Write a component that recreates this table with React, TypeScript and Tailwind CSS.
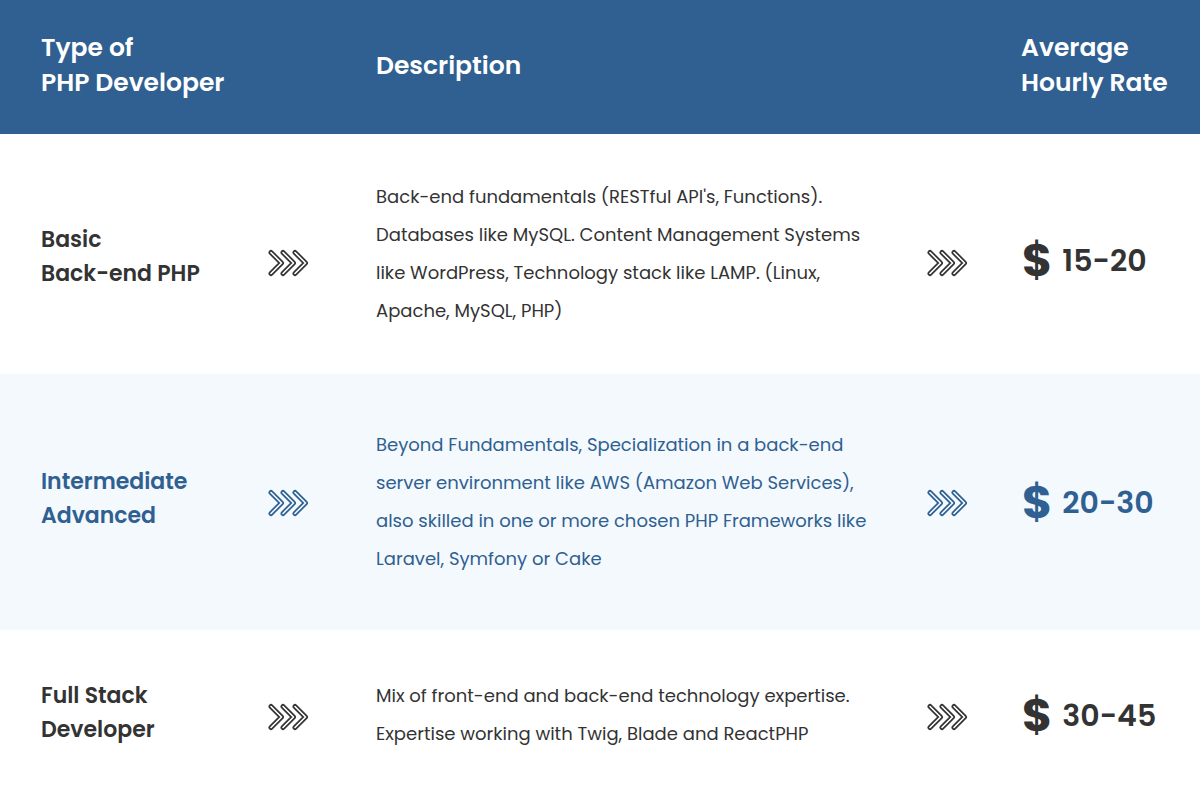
const rows = [
    {
        title: ['Basic', 'Back-end PHP'],
        desc: [
            "Back-end fundamentals (RESTful API's, Functions).",
            'Databases like MySQL. Content Management Systems',
            'like WordPress, Technology stack like LAMP. (Linux,',
            'Apache, MySQL, PHP)',
        ],
        price: '15-20',
        accent: false,
        height: 'h-[240px]',
        titlePad: 'pt-[6px]',
        arrowPad: 'pt-[18px]',
        pricePad: 'pt-[12px]',
    },
    {
        title: ['Intermediate', 'Advanced'],
        desc: [
            'Beyond Fundamentals, Specialization in a back-end',
            'server environment like AWS (Amazon Web Services),',
            'also skilled in one or more chosen PHP Frameworks like',
            'Laravel, Symfony or Cake',
        ],
        price: '20-30',
        accent: true,
        height: 'h-[256px]',
        titlePad: 'pb-[7px]',
        arrowPad: 'pt-[2px]',
        pricePad: 'pt-0',
    },
    {
        title: ['Full Stack', 'Developer'],
        desc: ['Mix of front-end and back-end technology expertise.', 'Expertise working with Twig, Blade and ReactPHP'],
        price: '30-45',
        accent: false,
        height: 'h-[170px]',
        titlePad: 'pb-[5px]',
        arrowPad: 'pt-[4px]',
        pricePad: 'pt-0',
    },
];

function Chevrons({ color, bg }: { color: string; bg: string }) {
    const offsets = [0, 12, 24];
    return (
        <svg width="42" height="28" viewBox="0 0 42 28" fill="none">
            {offsets.map((o) => (
                <path
                    key={'o' + o}
                    d={`M${3 + o} 3.5 L${13.5 + o} 14 L${3 + o} 24.5`}
                    stroke={color}
                    strokeWidth="5"
                    strokeLinecap="round"
                    strokeLinejoin="round"
                />
            ))}
            {offsets.map((o) => (
                <path
                    key={'i' + o}
                    d={`M${3 + o} 3.5 L${13.5 + o} 14 L${3 + o} 24.5`}
                    stroke={bg}
                    strokeWidth="1.6"
                    strokeLinecap="round"
                    strokeLinejoin="round"
                />
            ))}
        </svg>
    );
}

export default function App() {
    return (
        <div className="h-[800px] w-[1200px] overflow-hidden bg-white font-['Poppins','Open_Sans',sans-serif]">
            <div className="grid h-[134px] grid-cols-[376px_645px_1fr] items-center bg-[#2f6091] pb-[4px] text-[25px] font-semibold leading-[35px] text-white">
                <div className="pl-[41px]">
                    Type of
                    <br />
                    PHP Developer
                </div>
                <div>Description</div>
                <div>
                    Average
                    <br />
                    Hourly Rate
                </div>
            </div>
            {rows.map((row) => {
                const color = row.accent ? '#2f6091' : '#333333';
                const bg = row.accent ? '#f3f9fd' : '#ffffff';
                return (
                    <div
                        key={row.price}
                        className={`grid ${row.height} grid-cols-[268px_108px_551px_94px_1fr] items-center ${
                            row.accent ? 'bg-[#f3f9fd] text-[#2f6091]' : 'bg-white text-[#333333]'
                        }`}
                    >
                        <div className={`pl-[41px] text-[22px] font-semibold leading-[34px] ${row.titlePad}`}>
                            {row.title.map((t) => (
                                <div key={t}>{t}</div>
                            ))}
                        </div>
                        <div className={`flex items-center ${row.arrowPad}`}>
                            <Chevrons color={color} bg={bg} />
                        </div>
                        <div className="text-[18px] leading-[38px] whitespace-nowrap">
                            {row.desc.map((d) => (
                                <div key={d}>{d}</div>
                            ))}
                        </div>
                        <div className={`flex items-center ${row.arrowPad}`}>
                            <Chevrons color={color} bg={bg} />
                        </div>
                        <div className={`flex items-center gap-[10px] pl-[1px] ${row.pricePad}`}>
                            <span className="text-[46px] leading-none font-bold">$</span>
                            <span className="pt-[2px] text-[30px] leading-none font-semibold">{row.price}</span>
                        </div>
                    </div>
                );
            })}
        </div>
    );
}
